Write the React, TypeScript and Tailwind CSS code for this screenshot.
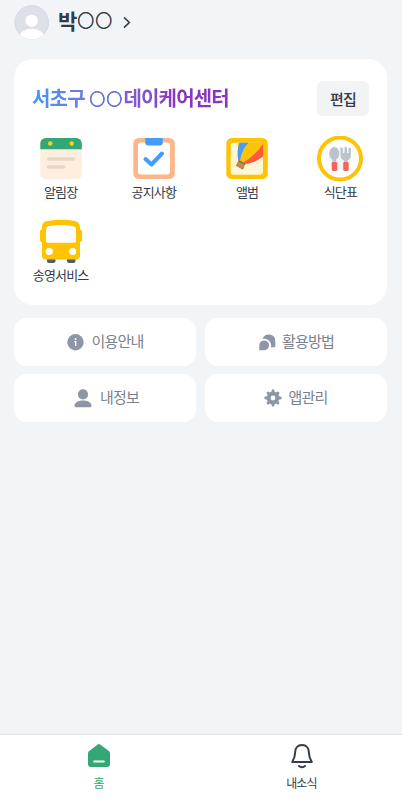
import React from 'react';

const NoticeBookIcon: React.FC = () => (
    <svg width="46" height="46" viewBox="0 0 46 46">
        <rect x="2.300" y="2" width="41.500" height="41" rx="5.500" fill="#fdeede" />
        <path d="M2.300 13.200V7.500A5.500 5.500 0 0 1 7.800 2h30.500A5.500 5.500 0 0 1 43.800 7.500v5.700z" fill="#33a776" />
        <circle cx="12.200" cy="7.500" r="2.200" fill="#fbd417" />
        <circle cx="33.800" cy="7.500" r="2.200" fill="#fbd417" />
        <path d="M10.700 23h24.500M10.700 31h15" stroke="#e5d8ca" strokeWidth="3.600" strokeLinecap="round" />
    </svg>
);

const ClipboardIcon: React.FC = () => (
    <svg width="46" height="46" viewBox="0 0 46 46">
        <rect x="2.300" y="2" width="41.500" height="41" rx="5.500" fill="#fdb689" />
        <rect x="7" y="6.500" width="32" height="32" rx="3" fill="#fff" />
        <path d="M14.200 2h17.600v4.500a3 3 0 0 1-3 3H17.200a3 3 0 0 1-3-3z" fill="#439cfc" />
        <path d="M14.500 23l6 5.500 10.500-11" fill="none" stroke="#439cfc" strokeWidth="4" strokeLinecap="round" strokeLinejoin="round" />
    </svg>
);

const AlbumIcon: React.FC = () => (
    <svg width="46" height="46" viewBox="0 0 46 46">
        <rect x="2.300" y="2" width="41.500" height="41" rx="5.500" fill="#ffc304" />
        <rect x="6.700" y="6.700" width="32.300" height="32" rx="3" fill="#fff6d6" />
        <path d="M14.200 25V6.700H39v3.500L20 28z" fill="#ffc304" />
        <path d="M15.500 6.700h9C20 11 17 18 16 25l-2-1.200c-.8-7-.5-12.500 1.500-17.100z" fill="#439cfc" />
        <path d="M39 8v12.500c-5 4-11.500 7-18.500 7.500l-1-1.700C27 21.500 34 15.500 39 8z" fill="#ff5a3c" />
        <path d="M14.800 24l7.200 3.600-3.500 5.900-6.800-3.700z" fill="#bd8a50" />
        <path d="M14.500 24.800l6.500 3.400M17.800 33.200l1.500-1.500" stroke="#89684a" strokeWidth="1.100" />
    </svg>
);

const MealIcon: React.FC = () => (
    <svg width="46" height="46" viewBox="0 0 46 46">
        <circle cx="23" cy="22.500" r="21" fill="#fff" stroke="#ffc304" strokeWidth="4" />
        <circle cx="23" cy="22.700" r="11.500" fill="#f3f4f5" />
        <ellipse cx="17.200" cy="17.500" rx="5" ry="6.500" fill="#bcc3cb" />
        <path d="M17.400 22v6" stroke="#bcc3cb" strokeWidth="3.600" />
        <path d="M23.500 12.300a1.200 1.200 0 0 1 2.300 0V17h1.800v-5a1.200 1.200 0 0 1 2.400 0v5h1.600v-4.700a1.200 1.200 0 0 1 2.300 0V19c0 3.200-1.500 4.700-3.200 5.200V28h-3.800v-3.800c-1.900-.5-3.400-2-3.400-5.200z" fill="#bcc3cb" />
        <rect x="14.700" y="26" width="5.500" height="9" rx="1.400" fill="#fb6257" />
        <rect x="26.200" y="26" width="5.500" height="9" rx="1.400" fill="#fb6257" />
    </svg>
);

const BusIcon: React.FC = () => (
    <svg width="46" height="46" viewBox="0 0 46 46">
        <rect x="9" y="36" width="8.500" height="8" rx="2" fill="#545d69" />
        <rect x="29" y="36" width="8.500" height="8" rx="2" fill="#545d69" />
        <rect x="1.900" y="10.500" width="4" height="12.500" rx="2" fill="#ffc304" />
        <rect x="40.100" y="10.500" width="4" height="12.500" rx="2" fill="#ffc304" />
        <path d="M4 9c0-4 1.500-6.200 5.500-7 8-1.600 19-1.600 27 0 4 .8 5.500 3 5.500 7v27.500a4 4 0 0 1-4 4H8a4 4 0 0 1-4-4z" fill="#ffc304" />
        <path d="M8 11C8 8.500 9 7.300 11.500 6.900c7.300-1.200 15.700-1.200 23 0 2.500.4 3.500 1.600 3.500 4.100V22a1.800 1.800 0 0 1-1.800 1.800H9.800A1.800 1.800 0 0 1 8 22z" fill="#fff" />
        <circle cx="11.300" cy="32.500" r="3.600" fill="#fff" />
        <circle cx="34.700" cy="32.500" r="3.600" fill="#fff" />
    </svg>
);

const InfoIcon: React.FC = () => (
    <svg width="17" height="17" viewBox="0 0 17 17">
        <circle cx="8.500" cy="8.300" r="8.200" fill="#8e96a5" />
        <circle cx="8.500" cy="5.100" r="1" fill="#fff" />
        <path d="M7.300 7.600h1.400v4.400" fill="none" stroke="#fff" strokeWidth="1.400" />
    </svg>
);

const ChatIcon: React.FC = () => (
    <svg width="17" height="17" viewBox="0 0 17 17" fill="#8e96a5">
        <path d="M3.600 5A6.500 6.500 0 0 1 16.300 6.700v6.500H12A7 7 0 0 0 3.600 5z" />
        <path d="M.3 16.200v-5A4.900 4.900 0 1 1 5.300 16.200z" />
    </svg>
);

const PersonIcon: React.FC = () => (
    <svg width="18" height="19" viewBox="0 0 18 19" fill="#8e96a5">
        <circle cx="9" cy="5.400" r="5.100" />
        <path d="M.5 17.100c0-3.500 3.500-5.600 8.500-5.600s8.500 2.100 8.500 5.600c0 .8-.5 1.200-1.200 1.200H1.700c-.7 0-1.200-.4-1.200-1.200z" />
    </svg>
);

const GearIcon: React.FC = () => (
    <svg width="18" height="18" viewBox="0 0 18 18">
        <path
            d="M9 1.700v14.600M1.700 9h14.600M4.050 4.050l9.900 9.900M13.950 4.050l-9.900 9.900"
            stroke="#8e96a5"
            strokeWidth="2.900"
            strokeLinecap="round"
        />
        <circle cx="9" cy="9" r="4.400" fill="#fff" stroke="#8e96a5" strokeWidth="4" />
    </svg>
);

const services = [
    { label: '알림장', icon: <NoticeBookIcon /> },
    { label: '공지사항', icon: <ClipboardIcon /> },
    { label: '앨범', icon: <AlbumIcon /> },
    { label: '식단표', icon: <MealIcon /> },
    { label: '송영서비스', icon: <BusIcon /> },
];

const menus = [
    { label: '이용안내', icon: <InfoIcon />, spacing: 'gap-[7px] pl-px' },
    { label: '활용방법', icon: <ChatIcon />, spacing: 'gap-1.5 pl-px' },
    { label: '내정보', icon: <PersonIcon />, spacing: 'gap-2 pl-[3px]' },
    { label: '앱관리', icon: <GearIcon />, spacing: 'gap-1.5' },
];

const App: React.FC = () => {
    return (
        <div className="flex h-[798px] w-[402px] flex-col overflow-hidden bg-[#f1f5f8] font-['Noto_Sans_CJK_KR',sans-serif] tracking-[-0.05em] text-[#343b47]">
            {/* Profile */}
            <header className="flex h-[59px] items-start pl-[14px] pt-[5px]">
                <svg width="36" height="36" viewBox="0 0 36 36">
                    <defs>
                        <clipPath id="avatar">
                            <circle cx="17.700" cy="17.500" r="17" />
                        </clipPath>
                    </defs>
                    <circle cx="17.700" cy="17.500" r="17" fill="#dde0e6" />
                    <circle cx="17.700" cy="17.500" r="16.800" fill="none" stroke="#d3d7dc" strokeWidth=".8" />
                    <g clipPath="url(#avatar)" fill="#fff">
                        <circle cx="17.700" cy="15.700" r="6.200" />
                        <ellipse cx="17.700" cy="33" rx="13" ry="9.300" />
                    </g>
                </svg>
                <h1 className="ml-2 flex h-[31px] w-[57px] items-center text-[21px] font-bold">
                    박
                    <span className="ml-px pb-px text-[16.500px] font-medium tracking-[1.400px] [-webkit-text-stroke:0.6px_#343b47]">○○</span>
                </h1>
                <svg className="ml-2 mt-[11px]" width="8" height="13" viewBox="0 0 8 13">
                    <path d="M1.500 1.800l4.800 4.700-4.800 4.700" fill="none" stroke="#3c434e" strokeWidth="1.700" strokeLinecap="round" />
                </svg>
            </header>

            <main className="flex-1 pl-[14px] pr-[15px]">
                {/* Center card */}
                <section className="h-[246px] rounded-[19px] bg-white pt-[22px]">
                    <div className="flex h-[35px] items-center justify-between pl-[18px] pr-[18px]">
                        <h2 className="bg-linear-to-r from-[#3f98fb] to-[#8a35bd] to-75% bg-clip-text pb-[2px] text-[20px] leading-[32px] font-bold text-transparent">
                            서초구{' '}
                            <span className="ml-px align-[1px] text-[15.500px] leading-none font-medium tracking-[1.400px] text-[#6570e0] [-webkit-text-stroke:0.5px_#6570e0]">○○</span>
                            데이케어센터
                        </h2>
                        <button className="h-[35px] w-[52px] rounded-[6px] bg-[#f1f3f5] pt-px text-[15px] font-medium tracking-[-0.05em]">
                            편집
                        </button>
                    </div>
                    <div className="mt-[20px] grid grid-cols-4">
                        {services.map((item) => (
                            <div key={item.label} className="flex h-[83px] flex-col items-center">
                                {item.icon}
                                <span className="text-[13px] leading-[20px] whitespace-nowrap">{item.label}</span>
                            </div>
                        ))}
                    </div>
                </section>

                {/* Shortcut buttons */}
                <div className="mt-[13px] grid grid-cols-2 gap-x-[9px] gap-y-2">
                    {menus.map((item) => (
                        <button
                            key={item.label}
                            className={`flex h-[48px] items-center justify-center rounded-[13px] bg-white text-[15px] tracking-[-0.05em] text-[#79818e] ${item.spacing}`}
                        >
                            {item.icon}
                            <span className="pb-0.5">{item.label}</span>
                        </button>
                    ))}
                </div>
            </main>

            {/* Bottom tabs */}
            <nav className="grid h-[64px] grid-cols-2 border-t border-[#dfe3e7] bg-white text-[12px]">
                <a href="#" className="flex flex-col items-center pr-1 pt-[8px] text-[#33a776]">
                    <svg width="24" height="25" viewBox="0 0 24 25">
                        <path d="M10.700 1.600a2 2 0 0 1 2.500 0l8.600 6.400a3 3 0 0 1 1.200 2.400V21a3 3 0 0 1-3 3H4a3 3 0 0 1-3-3V10.400A3 3 0 0 1 2.200 8z" fill="#33a776" />
                        <path d="M7.200 18.500h9.600" stroke="#fff" strokeWidth="2" strokeLinecap="round" />
                    </svg>
                    <span className="mt-1.5 leading-[18px]">홈</span>
                </a>
                <a href="#" className="flex flex-col items-center pt-[8px]">
                    <svg width="24" height="26" viewBox="0 0 24 26" fill="none" stroke="#343c49" strokeWidth="2" strokeLinejoin="round" strokeLinecap="round">
                        <path d="M12 2C7.500 2 5.200 5.200 5.200 9c0 5-1.400 7.400-3 10h19.600c-1.600-2.600-3-5-3-10 0-3.800-2.300-7-6.800-7z" />
                        <path d="M9 23c1.600 1.500 4.400 1.500 6 0" />
                    </svg>
                    <span className="mt-[5px] leading-[18px]">내소식</span>
                </a>
            </nav>
        </div>
    );
};

export default App;
